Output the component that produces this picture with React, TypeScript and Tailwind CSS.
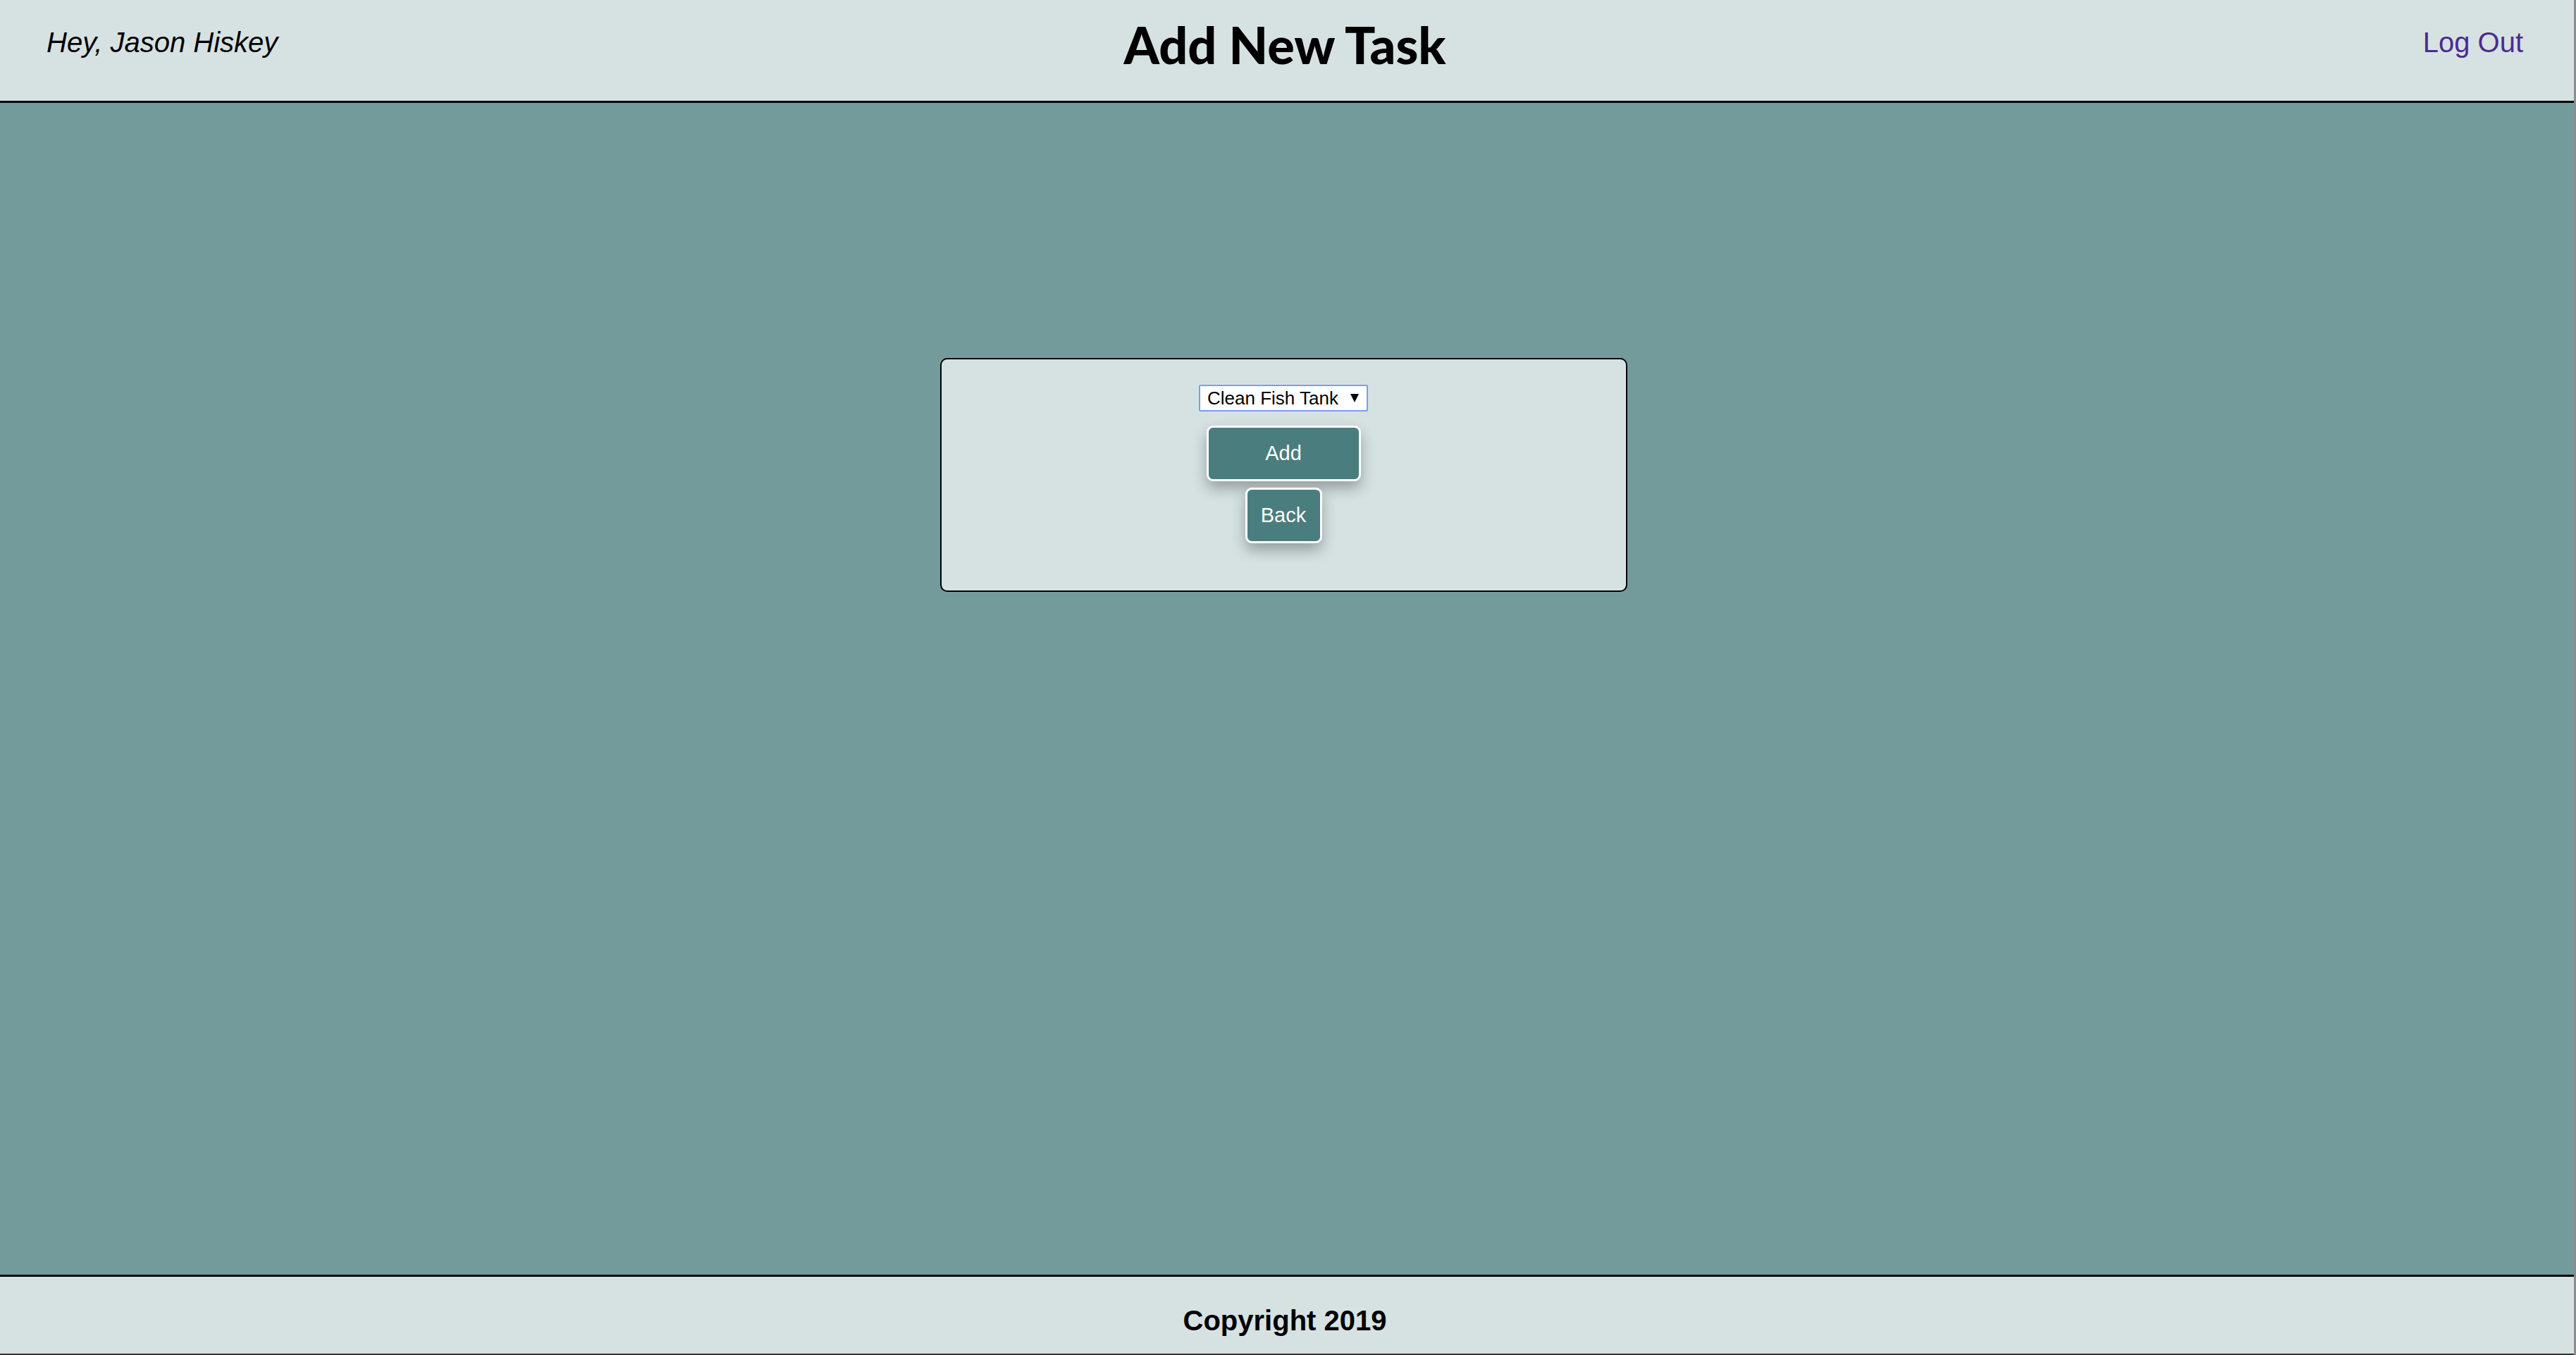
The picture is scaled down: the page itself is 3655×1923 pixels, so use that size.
export default function App() {
  return (
    <div className="flex flex-col h-[1923px] border-r-[3px] border-[#8c8c8c] bg-[#749b9c] font-['Liberation_Sans',Arial,sans-serif]">
      <header className="grid grid-cols-[1fr_auto_1fr] items-start h-[146px] bg-[#d6e2e2] border-b-[3px] border-black">
        <p className="pl-[66px] mt-[37px] text-[40px] leading-[46px] italic text-black">Hey, Jason Hiskey</p>
        <h1 className="mt-[20px] pr-[6px] text-[72px] leading-[1.2] font-black text-black font-['Lato',sans-serif]">Add New Task</h1>
        <a className="justify-self-end pr-[72px] mt-[37px] text-[40px] leading-[46px] text-[#4b2c91] cursor-pointer">Log Out</a>
      </header>

      <main className="flex-1 flex justify-center items-start pr-[10px]">
        <section className="mt-[362px] w-[975px] h-[332px] bg-[#d6e2e2] border-2 border-black rounded-[10px] flex flex-col items-center pt-[36px]">
          {/* fake select, native one renders differently per browser */}
          <div className="flex items-center justify-between w-[240px] h-[38px] pl-[10px] pr-[11px] bg-white border-2 border-[#7b9cf7] rounded-[2px] text-[26px] leading-none text-black">
            <span>Clean Fish Tank</span>
            <svg width="12" height="12" viewBox="0 0 12 12">
              <path d="M0 0 L12 0 L6 12 Z" fill="#000" />
            </svg>
          </div>
          <button className="mt-[20px] w-[219px] h-[79px] bg-[#4a7d7e] border-[3px] border-white rounded-[9px] text-white text-[29px] shadow-[0_10px_20px_rgba(0,0,0,0.3)]">
            Add
          </button>
          <button className="mt-[9px] w-[109px] h-[79px] bg-[#4a7d7e] border-[3px] border-white rounded-[9px] text-white text-[29px] shadow-[0_10px_20px_rgba(0,0,0,0.3)]">
            Back
          </button>
        </section>
      </main>

      <footer className="h-[114px] bg-[#d6e2e2] border-t-[3px] border-b-2 border-t-black border-b-[#333] flex justify-center items-start pt-[39px] pr-[6px]">
        <p className="text-[40px] leading-[46px] font-bold text-black">Copyright 2019</p>
      </footer>
    </div>
  );
}
